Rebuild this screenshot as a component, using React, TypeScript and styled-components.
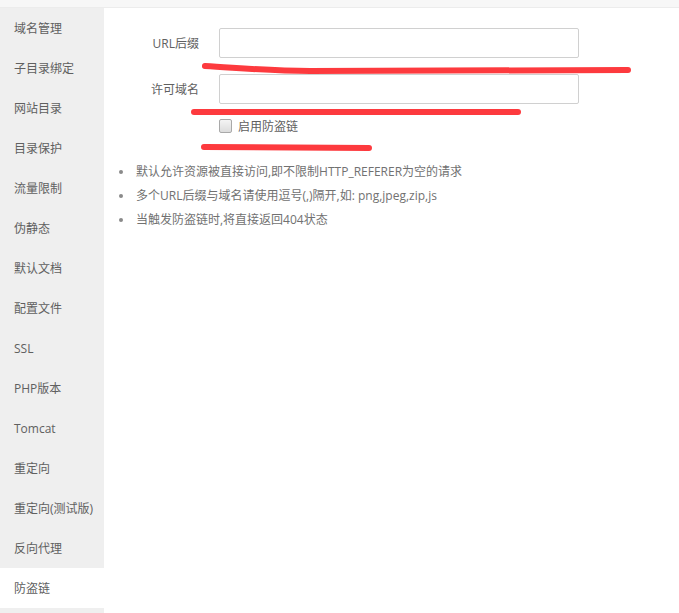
import React from "react";
import styled, { createGlobalStyle } from "styled-components";

const GlobalStyle = createGlobalStyle`
  body {
    margin: 0;
    background: #fff;
    font-family: "Open Sans", "Noto Sans CJK SC", sans-serif;
    font-size: 12px;
    color: #555;
  }
`;

const Page = styled.div`
  position: relative;
  width: 679px;
  height: 613px;
  overflow: hidden;
`;

const TopBar = styled.div`
  height: 7px;
  background: #f7f7f7;
  border-bottom: 1px solid #ececec;
`;

const Body = styled.div`
  display: flex;
  height: 605px;
`;

const Sidebar = styled.ul`
  width: 104px;
  margin: 0;
  padding: 0;
  list-style: none;
  background: #efefef;
`;

const NavItem = styled.li<{ $active?: boolean }>`
  height: 39px;
  padding-top: 1px;
  line-height: 40px;
  padding-left: 14px;
  font-size: 12px;
  color: #606060;
  white-space: nowrap;
  background: ${(p) => (p.$active ? "#fff" : "transparent")};
`;

const Main = styled.div`
  flex: 1;
  padding-top: 20px;
`;

const FormRow = styled.div`
  display: flex;
  align-items: center;
  margin-bottom: 16px;
`;

const Label = styled.label`
  width: 95px;
  text-align: right;
  padding-right: 20px;
  font-size: 12px;
  color: #606060;
`;

const TextInput = styled.input`
  box-sizing: border-box;
  width: 360px;
  height: 30px;
  border: 1px solid #d0d0d0;
  border-radius: 2px;
  padding: 0 8px;
  outline: none;
`;

const CheckRow = styled.label`
  display: flex;
  align-items: center;
  gap: 6px;
  margin-top: -1px;
  padding-left: 115px;
  height: 14px;
  font-size: 12px;
  color: #606060;
`;

const Box = styled.span`
  box-sizing: border-box;
  width: 13px;
  height: 14px;
  border: 1px solid #a9a9a9;
  border-radius: 2px;
  background: linear-gradient(#f4f4f4, #dcdcdc);
`;

const Tips = styled.ul`
  margin: 27px 0 0;
  padding: 0 0 0 14px;
  list-style: none;
`;

const Tip = styled.li`
  position: relative;
  padding-left: 18px;
  line-height: 24px;
  font-size: 12px;
  color: #717171;

  &::before {
    content: "";
    position: absolute;
    left: 1px;
    top: 10px;
    width: 4px;
    height: 4px;
    border-radius: 50%;
    background: #8a8a8a;
  }
`;

const Marks = styled.svg`
  position: absolute;
  left: 0;
  top: 0;
  pointer-events: none;
`;

const navs = [
  "域名管理",
  "子目录绑定",
  "网站目录",
  "目录保护",
  "流量限制",
  "伪静态",
  "默认文档",
  "配置文件",
  "SSL",
  "PHP版本",
  "Tomcat",
  "重定向",
  "重定向(测试版)",
  "反向代理",
  "防盗链",
];

const tips = [
  "默认允许资源被直接访问,即不限制HTTP_REFERER为空的请求",
  "多个URL后缀与域名请使用逗号(,)隔开,如: png,jpeg,zip,js",
  "当触发防盗链时,将直接返回404状态",
];

export default function App() {
  return (
    <Page>
      <GlobalStyle />
      <TopBar />
      <Body>
        <Sidebar>
          {navs.map((n) => (
            <NavItem key={n} $active={n === "防盗链"}>
              {n}
            </NavItem>
          ))}
        </Sidebar>
        <Main>
          <FormRow>
            <Label>URL后缀</Label>
            <TextInput />
          </FormRow>
          <FormRow>
            <Label>许可域名</Label>
            <TextInput />
          </FormRow>
          <CheckRow>
            <Box />
            启用防盗链
          </CheckRow>
          <Tips>
            {tips.map((t) => (
              <Tip key={t}>{t}</Tip>
            ))}
          </Tips>
        </Main>
      </Body>
      <Marks width="679" height="613">
        <g stroke="#fd3a3e" strokeWidth="6" strokeLinecap="round" fill="none">
          <path d="M205 66 C 240 68, 270 71, 310 71 L 628 70" />
          <path d="M194 112 L 518 112" />
          <path d="M204 147 L 369 148" />
        </g>
      </Marks>
    </Page>
  );
}
